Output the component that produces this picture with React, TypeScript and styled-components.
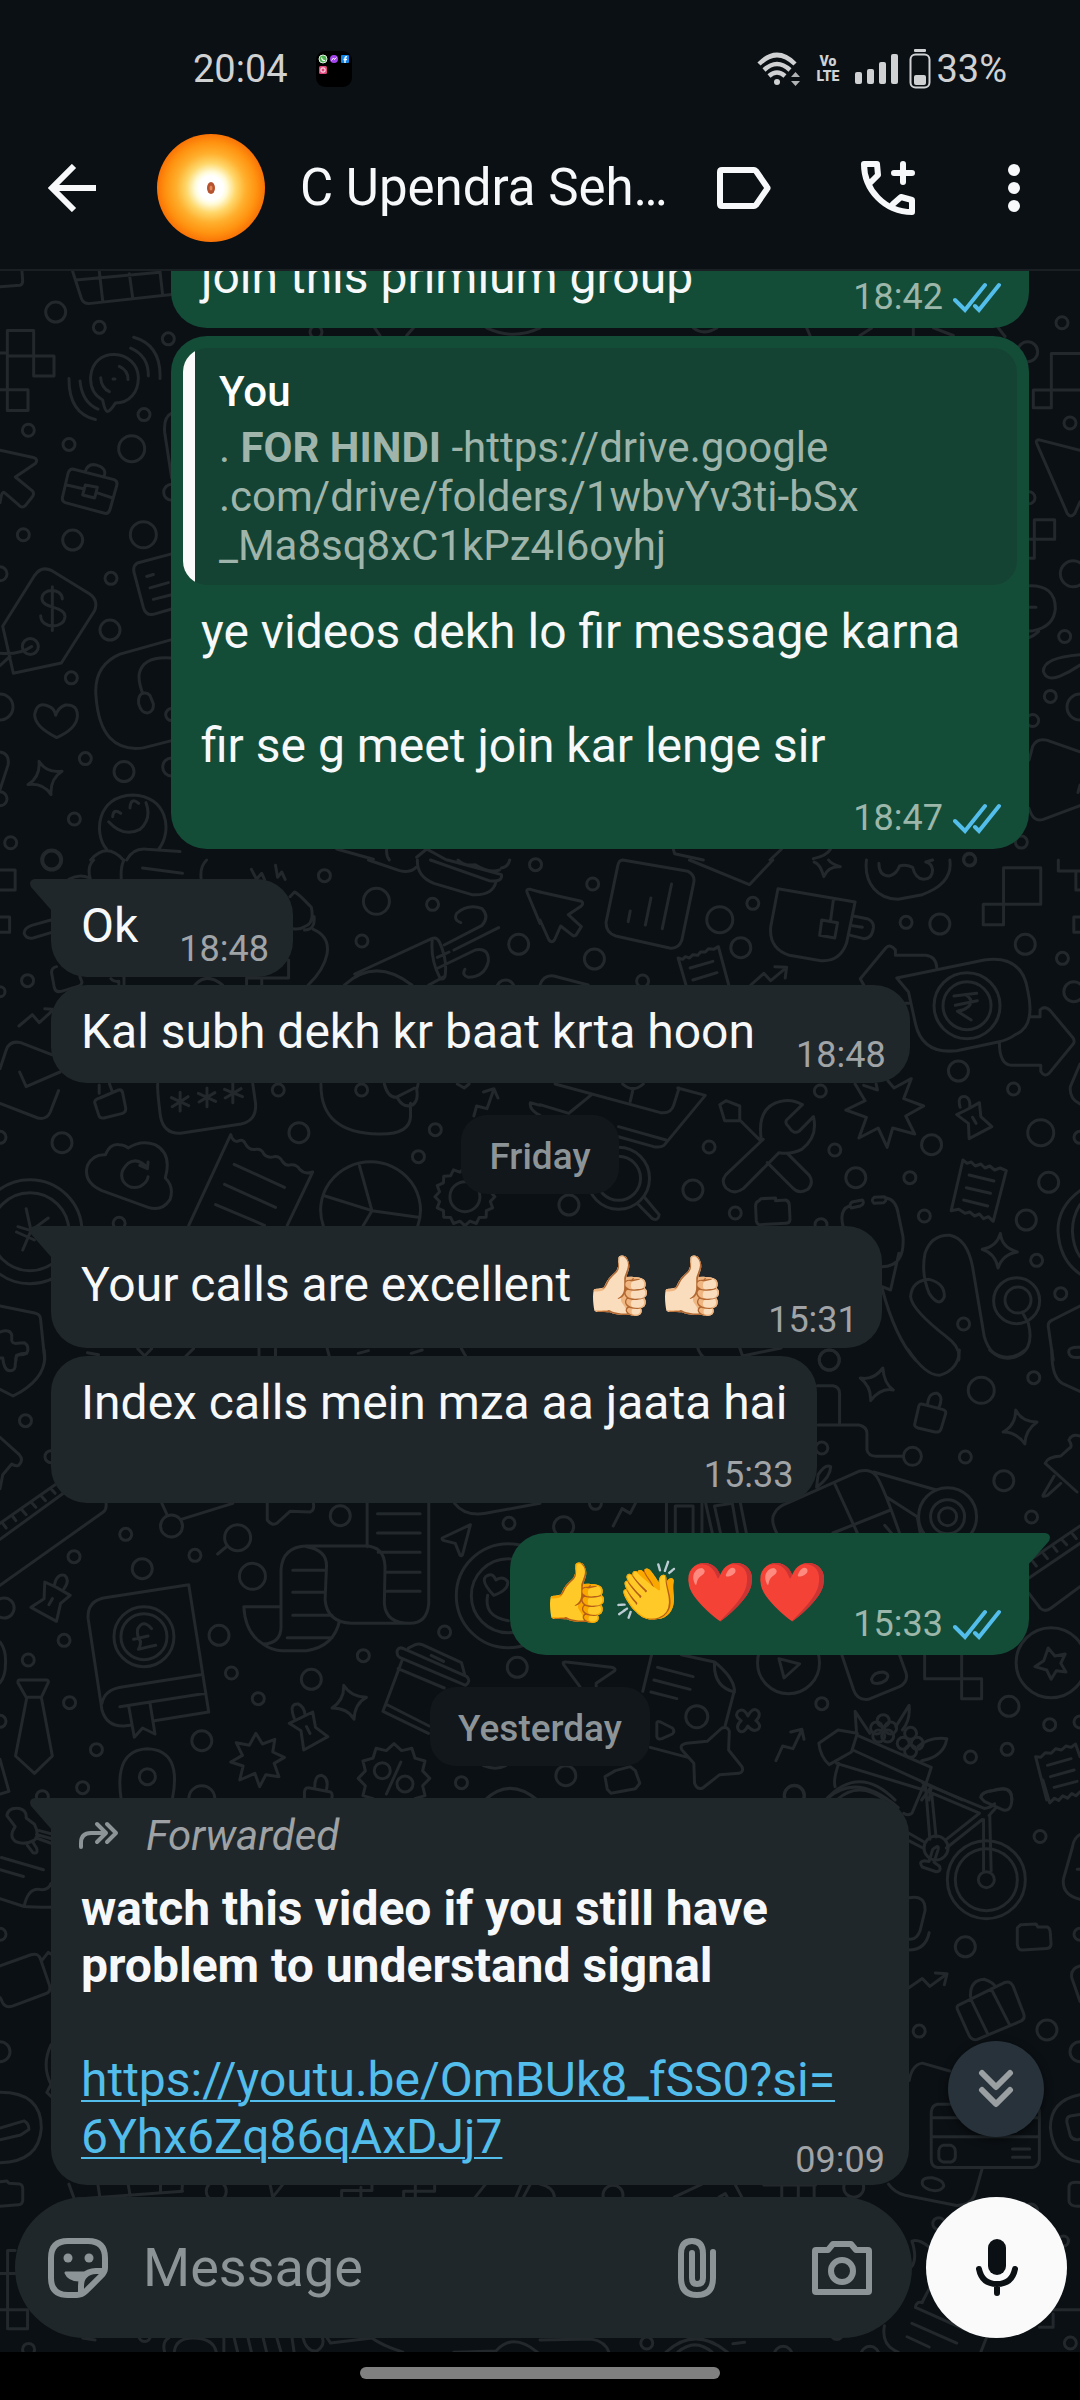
import React from 'react';
import styled, { createGlobalStyle, css } from 'styled-components';

const color = {
  ink: '#0b1014',
  doodle: '#22282c',
  incoming: '#20272b',
  outgoing: '#144d37',
  quote: '#144333',
  text: '#f7f8fa',
  muted: '#8d9498',
  link: '#53bdeb',
};

const GlobalStyle = createGlobalStyle`
  html, body { margin: 0; padding: 0; background: #000; }
  * { box-sizing: border-box; }
  button { border: 0; padding: 0; background: none; color: inherit; font: inherit; display: flex; align-items: center; justify-content: center; flex: none; }
  svg { display: block; flex: none; }
`;

/* ---------- shell ---------- */

const Screen = styled.div`
  display: flex;
  flex-direction: column;
  height: 100vh;
  overflow: hidden;
  background: ${color.ink};
  color: ${color.text};
  font-family: Roboto, 'Noto Sans', sans-serif;
`;

const StatusBar = styled.div`
  display: flex;
  align-items: center;
  flex: none;
  height: 106px;
  padding: 32px 73px 0 193px;
  color: #d0d1d2;
  font-size: 38px;
  line-height: 44px;
`;

const AppFolder = styled.div`
  margin-left: 28px;
  width: 36px;
  height: 36px;
  border-radius: 9px;
  background: #000;
`;

const StatusIcons = styled.div`
  display: flex;
  align-items: center;
  margin-left: auto;
`;

const Volte = styled.div`
  display: flex;
  flex-direction: column;
  align-items: center;
  margin: 0 16px;
  font-size: 14px;
  font-weight: 900;
  line-height: 15px;
`;

const Battery = styled.div`
  display: flex;
  align-items: center;
  gap: 5px;
  margin-left: 11px;
`;

const AppBar = styled.header`
  display: flex;
  align-items: center;
  flex: none;
  height: 165px;
  padding: 0 57px 0 48px;
  border-bottom: 2px solid #191f23;
`;

const Avatar = styled.div`
  display: flex;
  align-items: center;
  justify-content: center;
  flex: none;
  width: 108px;
  height: 108px;
  margin: 0 35px 0 61px;
  border-radius: 50%;
  background: radial-gradient(circle closest-side, #fff 0 22%, #fffbd8 30%, #ffd76a 46%, #ffb02e 64%, #ff9310 84%, #f97306 100%);
`;

const ContactName = styled.h1`
  flex: 1;
  min-width: 0;
  margin: 0;
  font-size: 51px;
  font-weight: 400;
  line-height: 60px;
  white-space: nowrap;
  overflow: hidden;
`;

const BarActions = styled.div`
  display: flex;
  align-items: center;
  gap: 90px;
`;

const Conversation = styled.main`
  position: relative;
  display: flex;
  flex-direction: column;
  flex: 1;
  min-height: 0;
  overflow: hidden;
`;

const WallpaperSvg = styled.svg`
  position: absolute;
  inset: 0;
  width: 100%;
  height: 100%;
`;

const Messages = styled.div`
  position: relative;
  display: flex;
  flex-direction: column;
  justify-content: flex-end;
  flex: 1;
  min-height: 0;
  padding: 0 51px 12px;
  overflow: hidden;
`;

/* ---------- bubbles ---------- */

const Bubble = styled.article<{ $out?: boolean; $tail?: boolean; $wide?: boolean; $gap?: number }>`
  position: relative;
  flex: none;
  max-width: 100%;
  width: ${p => (p.$wide ? '858px' : 'auto')};
  margin-top: ${p => p.$gap ?? 8}px;
  align-self: ${p => (p.$out ? 'flex-end' : 'flex-start')};
  background: ${p => (p.$out ? color.outgoing : color.incoming)};
  border-radius: 36px;
  ${p => p.$tail && (p.$out ? css`border-top-right-radius: 0;` : css`border-top-left-radius: 0;`)}
`;

const TailSvg = styled.svg<{ $out?: boolean }>`
  position: absolute;
  top: 0;
  ${p => (p.$out ? css`right: -21px; transform: scaleX(-1);` : css`left: -21px;`)}
`;

const InlineRow = styled.div<{ $out?: boolean }>`
  display: flex;
  align-items: flex-end;
  justify-content: space-between;
  gap: ${p => (p.$out ? 25 : 41)}px;
  padding: 0 ${p => (p.$out ? 28 : 24)}px 0 30px;
`;

const StackedRow = styled.div<{ $out?: boolean }>`
  display: flex;
  flex-direction: column;
  padding: 0 ${p => (p.$out ? 28 : 24)}px 0 30px;
`;

const OverlapRow = styled.div`
  display: grid;
  padding: 0 24px 0 30px;
  > * { grid-area: 1 / 1; }
  > p { margin-bottom: 20px; }
  > footer { align-self: end; justify-self: end; padding-bottom: 4px; }
`;

const Text = styled.p<{ $emoji?: boolean }>`
  margin: 18px 0 23px;
  font-size: 48px;
  line-height: ${p => (p.$emoji ? 81 : 57)}px;
  white-space: pre-line;
`;

const StackedText = styled(Text)`
  padding-right: 6px;
`;

const Link = styled.a`
  color: ${color.link};
  text-decoration: underline;
  text-decoration-thickness: 2px;
  text-underline-offset: 4px;
`;

const Emoji = styled.span`
  font-size: 58px;
  line-height: 58px;
  vertical-align: -4px;
`;

const MetaBox = styled.footer<{ $out?: boolean }>`
  display: flex;
  align-items: center;
  align-self: flex-end;
  gap: 10px;
  padding-bottom: ${p => (p.$out ? 10 : 7)}px;
  color: ${p => (p.$out ? '#9cb7aa' : '#a0a4a7')};
  font-size: 36px;
  line-height: 42px;
`;

const Quote = styled.blockquote`
  margin: 12px 12px 0;
  padding: 19px 24px 15px 36px;
  border-radius: 24px;
  background: linear-gradient(to right, #fafafa 12px, ${color.quote} 12px);
  color: #9fb5ab;
  font-size: 42px;
  line-height: 49px;
`;

const QuoteAuthor = styled.div`
  margin-bottom: 7px;
  color: #fff;
  font-weight: 500;
`;

const Forwarded = styled.div`
  display: flex;
  align-items: center;
  gap: 27px;
  padding: 13px 28px 2px;
  color: #9ea2a4;
  font-size: 42px;
  font-style: italic;
  line-height: 49px;
`;

const DayPill = styled.div`
  flex: none;
  align-self: center;
  margin-top: 32px;
  padding: 21px 28px 16px;
  border-radius: 26px;
  background: #12171b;
  color: ${color.muted};
  font-size: 37px;
  font-weight: 500;
  line-height: 42px;
`;

const ScrollButton = styled.button`
  position: absolute;
  right: 36px;
  bottom: 60px;
  width: 96px;
  height: 96px;
  border-radius: 50%;
  background: #27323a;
  box-shadow: 0 3px 8px rgba(0, 0, 0, 0.5);
`;

/* ---------- composer ---------- */

const Composer = styled.form`
  position: relative;
  display: flex;
  gap: 14px;
  flex: none;
  padding: 0 13px 14px 15px;
`;

const InputBar = styled.div`
  display: flex;
  align-items: center;
  flex: 1;
  min-width: 0;
  height: 141px;
  padding: 0 40px 0 33px;
  border-radius: 71px;
  background: ${color.incoming};
  color: ${color.muted};
`;

const MessageInput = styled.input`
  flex: 1;
  min-width: 0;
  margin: 0 35px;
  padding: 0;
  border: 0;
  outline: 0;
  background: none;
  color: ${color.text};
  font-family: inherit;
  font-size: 54px;
  line-height: 62px;
  &::placeholder { color: ${color.muted}; opacity: 1; }
`;

const InputActions = styled.div`
  display: flex;
  align-items: center;
  gap: 96px;
`;

const MicButton = styled.button`
  width: 141px;
  height: 141px;
  border-radius: 50%;
  background: #fafafa;
  color: ${color.ink};
`;

const NavBar = styled.div`
  display: flex;
  justify-content: center;
  flex: none;
  height: 48px;
  padding-top: 15px;
  background: #000;
`;

const NavHandle = styled.div`
  width: 360px;
  height: 12px;
  border-radius: 6px;
  background: #808080;
`;

/* ---------- wallpaper ---------- */

type Dot = [number, number, number];
interface Scene { at: [number, number]; scale: [number, number]; d: string; dots: Dot[]; rings?: Dot[] }

const zigzag = (cx: number, cy: number, outer: number, inner: number, n: number) => {
  let d = '';
  for (let i = 0; i < n * 2; i++) {
    const r = i % 2 ? inner : outer;
    const a = (i * Math.PI) / n;
    d += `${i ? 'L' : 'M'}${(cx + r * Math.cos(a)).toFixed(1)} ${(cy + r * Math.sin(a)).toFixed(1)}`;
  }
  return d + 'Z';
};

const X = 540 / 1568;
const scenes: Scene[] = [
  {
    at: [0, 260], scale: [1 / 3, 600 / 1568],
    d: 'M0 70L60 66Q68 64 68 54L66 30M218 30L244 100Q250 114 266 114L515 90M228 52L480 32M298 30L308 106M388 36L398 98M480 30L488 92' +
      'M22 184H101V251H22ZM22 251V393H84V339H22M101 251H162V303H101ZM0 243H22M0 339H22' +
      'M322 396Q314 394 308 366C280 352 270 330 272 304C276 266 306 246 344 247C384 248 414 274 415 306C416 346 388 374 346 374Q330 396 322 396ZM302 308Q304 334 328 344M358 278Q384 288 384 312M339 311H345' +
      'M207 310Q206 400 286 417M240 316Q246 372 294 390M401 202Q484 222 480 310M392 230Q446 250 445 303' +
      'M218 546L342 574Q354 578 350 590L330 652Q326 664 314 662L196 634Q184 630 188 618L204 558Q208 546 218 546ZM200 588L250 598M290 608L338 622M256 588L292 594L284 622L248 614ZM256 552Q264 530 290 536Q322 544 312 566' +
      'M0 497L100 516Q116 520 106 532L46 567L98 604Q104 612 96 620L76 642Q66 650 56 640L16 610Q8 602 4 616L0 634' +
      'M40 1080L8 957L104 824Q124 798 156 812L268 872Q296 888 284 916L184 1053ZM157 854V968M187 886C186 856 124 856 126 886C128 912 196 904 195 932C192 966 122 964 122 930M0 1028Q60 1032 95 1010M0 1060L30 1036' +
      'M515 768L412 792Q398 800 402 816L430 908Q438 930 460 926L515 912M440 827L460 822M450 857L505 843M460 887L515 875' +
      'M515 992L360 1030Q280 1060 288 1140Q300 1290 430 1275L515 1256M515 1040Q430 1034 418 1080Q414 1100 428 1132M424 1134Q440 1128 450 1138L460 1160Q462 1180 442 1184Q424 1184 416 1160Q414 1140 424 1134Z' +
      'M170 1248Q104 1220 104 1188Q112 1150 150 1168Q164 1174 167 1190Q174 1170 196 1163Q234 1160 232 1194Q228 1226 170 1248Z' +
      'M117 1310Q140 1342 186 1336Q150 1356 153 1397Q130 1366 84 1371Q122 1350 117 1310Z' +
      'M320 1540C280 1500 290 1400 398 1398C500 1400 520 1490 476 1540M326 1468Q370 1510 420 1488Q456 1460 438 1418M338 1455Q340 1432 362 1446M390 1432Q392 1402 416 1420M272 1568Q320 1520 370 1568M380 1568Q400 1536 440 1540L540 1546' +
      'M0 1286Q30 1290 24 1320L0 1384M515 400Q490 410 494 450L515 570',
    dots: [[167, 136, 10], [298, 176, 6], [505, 206, 6], [432, 404, 6], [395, 493, 13], [207, 482, 6], [85, 445, 6], [70, 718, 6], [218, 732, 10], [430, 718, 13], [333, 832, 6], [330, 967, 10], [0, 820, 7], [91, 1010, 8], [214, 1092, 6], [0, 1168, 13], [256, 1303, 6], [372, 1337, 10], [223, 1461, 6], [32, 1523, 6], [155, 1568, 10], [515, 607, 8], [515, 1188, 6], [515, 1325, 9], [0, 1408, 7]],
  },
  {
    at: [600, 320], scale: [1 / 3, 540 / 1568],
    d: 'M1354 97H1440M1354 97V255H1300V203H1440M1440 378L1318 348Q1306 348 1310 358L1402 562Q1412 576 1424 562L1440 528M1287 637H1364V580H1303V692H1287' +
      'M1287 772Q1366 770 1366 838Q1362 890 1300 902L1287 903M1287 834H1308M1287 922Q1300 918 1316 904M1440 972Q1330 980 1330 1020Q1340 1050 1380 1034Q1410 1022 1440 1002' +
      'M1440 1254L1340 1220Q1310 1214 1298 1238L1287 1278M1287 1418Q1300 1460 1330 1450L1440 1410M1434 1372L1440 1350' +
      'M-790 1536L-680 1566M-640 1536Q-642 1556 -632 1568M-550 1560L-520 1536L-460 1568M220 1537L224 1550L310 1568M545 1536L510 1568M692 1536Q680 1556 640 1564' +
      'M1195 23L1215 48M940 23V45M1000 23L1060 45M620 23L630 45M780 45L815 23M-340 23Q-260 60 -180 23M-676 23L-660 45M-580 45L-560 23M280 23Q310 46 350 23',
    dots: [[1386, 8, 6], [1283, 92, 10], [1410, 299, 6], [1420, 737, 13], [1394, 919, 6], [1351, 1093, 6], [1440, 1124, 13], [1298, 1163, 6], [1264, 1516, 6], [1287, 516, 6], [1108, 1566, 6], [-852, 35, 6]],
  },
  {
    at: [0, 860], scale: [X, 1 / 3],
    d: 'M0 30H44V90H0M0 171H28V217H0M148 180L92 196Q70 204 70 220Q76 238 96 234L148 218M200 58Q230 40 260 54M262 56Q252 20 272 0M352 56Q350 20 360 0M414 24L530 40M584 56Q580 20 600 0M730 28L745 58L760 40L768 58M800 16L806 52L818 36L828 58' +
      'M842 110L855 96Q866 100 904 142Q914 190 884 200Q870 210 850 206M884 210Q916 210 912 170M910 208C980 240 950 320 895 375M838 300V354H716V375M760 354V375M566 375Q600 335 646 375' +
      'M164 320Q148 324 150 340L158 384Q162 398 178 394L224 380Q238 376 238 366L232 350M322 356Q330 366 345 364V375M360 352V375M55 498L94 464L114 488L152 452M130 446L152 448' +
      'M150 584L60 548Q28 540 18 570L0 626M0 730L110 774Q136 780 146 756L170 692M57 636L76 680L174 636' +
      'M290 714L344 690Q354 688 356 698L365 744Q366 756 356 760L302 774Q290 776 287 766L275 728Q274 718 290 714ZM288 700V675M325 692L318 672' +
      'M458 672Q456 690 466 770Q476 822 524 820L700 792Q746 782 742 730L734 672M523 697V753M498 713L548 737M500 740L546 710M601 684V740M576 700L626 724M578 726L624 698M676 670V728M652 688L704 710M654 714L700 686' +
      'M932 672Q930 820 1100 822Q1190 824 1192 770V730M1116 672Q1126 712 1150 712L1204 684M1154 714Q1170 744 1196 736Q1216 724 1210 690L1214 672' +
      'M1070 0L1160 32Q1190 40 1208 22M1212 0Q1210 50 1260 70L1370 104Q1430 108 1440 66M1250 0L1420 62Q1460 68 1456 44L1300 0M1330 0Q1350 20 1380 14Q1420 40 1450 30M1480 0Q1476 20 1456 24' +
      'M1245 375L1290 350M1030 342L1255 235Q1268 230 1276 246Q1300 300 1292 350Q1284 364 1276 350Q1250 300 1255 240M1000 375Q1090 290 1196 375' +
      'M1290 255L1400 196Q1422 170 1400 146Q1360 130 1326 160Q1316 180 1338 188M1318 270L1448 203M1270 292L1304 276M1272 324L1380 270Q1420 262 1418 304Q1408 350 1360 352Q1340 346 1350 328M1568 190L1530 96Q1528 86 1540 88L1568 96' +
      'M1328 672L1348 684L1362 672M1376 768L1384 738L1414 746L1434 688M1404 696L1434 686L1446 714M1568 736L1540 728Q1536 750 1568 766' +
      'M306 884Q320 850 346 854Q362 854 372 864Q410 838 450 854Q500 880 480 954Q506 980 494 1018Q470 1056 430 1042L296 992Q240 966 254 916Q270 882 306 884ZM428 924Q400 890 372 910Q344 936 358 964Q376 990 406 980Q428 968 430 950M406 916L428 926L430 906' +
      'M548 1096L670 824Q676 846 690 844Q706 836 712 850Q722 872 744 868Q760 866 766 882Q778 896 796 890Q812 888 820 904Q830 920 846 914Q864 914 870 928Q884 944 908 936L834 1096M680 913L826 982M652 973L800 1042M626 1034L768 1096' +
      'M939 1098A145 145 0 1 1 1213 1098M1044 918L1080 1052L1215 1072M1080 1052L944 1008M1080 1052L1054 1098' +
      zigzag(1350, 1010, 87, 75, 16) +
      'M52 1100L90 1112L140 1074M76 1046L90 1112L66 1170M48 1116L100 1140' +
      'M0 1338L104 1360Q118 1364 118 1380L130 1500M0 1416Q28 1406 34 1424V1440Q34 1452 50 1450L70 1448Q84 1456 80 1474Q76 1484 60 1484Q44 1484 46 1500' +
      'M254 1478L286 1484M400 1466L420 1488L440 1466M540 1488L562 1466M752 1466V1488M800 1466V1488M950 1466L956 1488M1040 1480L1070 1472M1194 1480L1226 1470M1340 1466L1352 1488',
    dots: [[80, 362, 6], [0, 395, 5], [942, 47, 6], [1093, 124, 13], [1256, 133, 6], [1051, 243, 6], [1506, 253, 10], [1555, 14, 6], [808, 690, 6], [1050, 690, 6], [868, 818, 10], [1264, 809, 6], [1215, 890, 6], [180, 848, 10], [0, 832, 6], [346, 1090, 6], [150, 0, 9], [1468, 387, 9]],
    rings: [[87, 1115, 52], [87, 1115, 39], [1350, 1010, 15]],
  },
  {
    at: [540, 860], scale: [X, 1 / 3],
    d: 'M0 96L120 124Q128 130 120 138L82 164L120 200L104 226Q98 230 92 224L60 198L42 240Q34 250 26 240L0 180' +
      'M240 0L430 34Q452 46 446 70L412 240Q402 268 376 264L220 228Q190 218 192 186L226 16Q230 0 240 0M262 153L256 185M322 114L306 195M382 72L355 206M434 0L608 74L676 0M796 6Q814 12 824 50Q836 18 872 20Q846 12 838 0' +
      'M948 0C940 70 980 116 1040 118L1110 104Q1200 70 1190 0M984 10Q984 48 1014 48Q1036 42 1044 18Q1062 12 1082 22Q1090 56 1114 58Q1140 56 1140 30Q1138 10 1120 6L1140 0' +
      'M1346 23H1454V133H1346ZM1287 133H1346V194H1287ZM1505 0V33H1568M1556 33V90H1568M1568 171H1550V217H1568' +
      'M691 86L915 126L890 250Q870 306 816 302L724 286Q664 266 670 200ZM852 118L844 180M818 180L864 188L856 234L812 226ZM910 168L950 176Q970 184 968 204Q964 236 940 236L902 226M908 197L936 202' +
      'M424 375L401 294L414 298L422 290L434 294L444 284L458 286L466 276L480 276L490 266L504 268L518 260L548 375M436 324L502 304M444 360L514 338M612 375L650 340L670 362L716 322M682 320L716 322L712 354M0 375Q10 344 40 348L140 375' +
      'M940 375L930 356L1004 264Q1018 250 1032 270V286H1120Q1150 290 1152 322M1036 354L1290 300Q1400 284 1416 390Q1440 500 1380 524Q1360 540 1330 546L1210 572Q1110 584 1090 490L1070 396ZM1060 430H1070M1424 470H1452V450Q1464 436 1480 450L1548 534Q1554 544 1548 552L1478 640Q1464 652 1454 634V616H1370Q1334 614 1334 548M1202 408L1268 400M1206 436L1270 422M1236 404Q1262 420 1244 440Q1230 452 1212 454L1252 480' +
      'M44 672L350 758Q380 762 388 736L404 684M400 684L480 706L360 856Q350 864 330 860L220 828M228 800L366 840M88 756L150 704M262 724L270 688M0 734L84 760M240 672Q270 700 300 672' +
      'M642 834Q630 740 700 724Q730 716 762 734L716 780Q710 790 722 800Q736 824 752 814L794 770Q808 830 760 868Q730 884 694 878L590 986Q564 1006 540 984Q524 964 540 944L648 838M580 780L640 842M580 782H536L522 734L540 722L580 738ZM660 908L734 984Q752 1004 778 988Q796 968 782 946L718 880' +
      'M915 672L944 722L888 750L948 772L926 834L982 804L1008 862L1024 804L1088 822L1062 768L1114 738L1056 716L1078 656L1028 684L1010 662M940 676L980 690L976 672' +
      'M1238 750L1210 764L1244 790L1246 836L1312 800L1280 770L1276 728L1238 750M1220 742Q1210 706 1236 710Q1250 716 1248 742M1256 772L1266 790M284 1032L326 1076Q344 1084 346 1064L302 1010' +
      'M1228 900L1240 910L1252 906L1264 918L1280 912L1292 924L1306 918L1320 930L1336 924L1354 932L1316 1084L1302 1070L1288 1076L1276 1062L1262 1068L1248 1056L1234 1060L1216 1048L1194 1052ZM1246 945L1318 963M1238 983L1308 1000M1230 1020L1300 1038' +
      'M636 1022L642 1016L684 1014V1022L714 1020Q724 1024 724 1036L726 1080Q724 1090 714 1090L640 1094Q630 1094 628 1082L626 1038Q626 1026 636 1022Z' +
      'M880 1098Q868 1050 898 1038M906 1026L936 1020Q944 1030 930 1038L904 1044Q896 1034 906 1026ZM970 1012L1000 1010Q1010 1020 998 1028L970 1030Q960 1020 970 1012ZM1006 1014Q1034 1020 1040 1060L1054 1130Q1060 1220 993 1220M1042 1180L1018 1290L993 1280M993 1284Q1030 1430 1090 1500' +
      'M1216 1500Q1222 1460 1180 1430Q1080 1350 1076 1310Q1080 1262 1130 1258Q1176 1270 1174 1310Q1160 1346 1130 1300Q1106 1240 1118 1180Q1136 1124 1190 1126Q1240 1136 1256 1220L1290 1430Q1310 1500 1366 1494Q1440 1480 1418 1390L1400 1356' +
      'M1337 1120Q1340 1162 1386 1176Q1344 1182 1330 1224Q1322 1180 1284 1168Q1326 1160 1337 1120Z' +
      'M1568 992Q1504 1040 1504 1112Q1508 1200 1568 1242M1568 1034Q1546 1070 1546 1114Q1548 1160 1568 1190M1490 1500L1476 1400Q1474 1386 1488 1380L1568 1338M1568 1462Q1530 1460 1536 1480Q1540 1496 1568 1492M1568 612L1540 680Q1536 716 1568 732' +
      'M458 1464Q466 1488 480 1494M580 1464L588 1488L700 1464',
    dots: [[153, 72, 6], [618, 130, 6], [522, 179, 13], [583, 263, 10], [158, 297, 10], [298, 363, 6], [1063, 187, 6], [1161, 192, 10], [1409, 253, 10], [1517, 295, 6], [1550, 395, 10], [1215, 633, 10], [1375, 687, 6], [814, 693, 6], [491, 861, 6], [856, 870, 6], [1137, 854, 10], [1454, 818, 13], [1568, 832, 6], [917, 953, 10], [1074, 953, 6], [444, 990, 10], [84, 1035, 10], [1477, 967, 10], [567, 1059, 6], [816, 1094, 6], [1116, 1068, 6], [1412, 1080, 10], [1442, 1201, 6], [1512, 1301, 6], [1230, 1392, 6], [840, 1500, 10], [1248, 0, 6]],
    rings: [[1240, 437, 33], [1240, 437, 24], [228, 955, 31], [228, 955, 22], [1384, 1322, 23], [1388, 1320, 13]],
  },
  {
    at: [0, 1350], scale: [X, 1 / 3],
    d: 'M0 118L38 138Q130 90 130 20L128 0M0 24H8Q12 62 28 62Q46 62 44 44L48 16Q60 10 78 10M0 262L56 314Q70 330 54 346Q44 350 34 342L8 374L0 416' +
      'M0 520L160 404M0 568L184 430M8 520L18 534M36 498L46 512M64 480L76 494M92 458L104 472M120 438L132 452M148 416L160 430M0 706L300 486Q310 478 308 460' +
      'M470 460L486 496M526 508L676 460M632 612L660 588M776 460V510Q790 530 806 518L842 484L900 486Q914 480 910 460' +
      'M1066 460V590M1245 460V760Q1240 820 1190 820Q1120 820 1116 760L1118 650Q1116 588 1060 588H890Q820 590 816 660V830Q816 880 764 882Q712 850 708 770H814M890 590Q950 600 948 650L944 750Q950 816 1020 820H1190M764 882Q790 902 820 902H890Q970 890 986 812M1096 491H1220M1096 549H1220M1098 607H1220M1124 667H1220M1124 724H1220M850 661H944M850 727H944M850 796H964M834 863H964' +
      'M548 704L300 744Q252 756 256 806L296 1080Q310 1130 360 1128L378 1126M448 1112L606 1086L548 704M296 1060Q304 1020 350 1012L582 974M348 1070L598 1030M374 1070L390 1162L414 1134L450 1152L436 1062M440 836Q416 806 400 836Q396 860 408 874Q408 890 402 898Q430 890 452 886M388 868L430 858' +
      'M130 696L164 712L204 736L176 760L164 814L90 772L128 746ZM158 706Q164 670 188 676Q204 690 186 716M152 746L142 764' +
      'M1366 524L1284 564Q1282 570 1290 572L1322 580L1336 616Q1342 620 1344 610Z' +
      'M1434 736Q1396 696 1410 680Q1430 664 1440 690Q1460 676 1474 694Q1478 720 1434 736ZM1416 736Q1404 800 1476 812' +
      'M56 990H136Q142 992 140 998L120 1042H76L52 998Q52 990 56 990ZM78 1042L45 1218L100 1270L152 1218L120 1042M0 876Q18 900 16 940Q16 980 0 998M0 1228L26 1324L0 1332' +
      'M352 1350Q330 1200 428 1196Q530 1200 500 1350' +
      'M743 1150L762 1182L798 1168L792 1206L826 1222L796 1240L810 1280L772 1274L754 1310L740 1270L696 1290L706 1248L670 1236L704 1216L686 1178L724 1186Z' +
      'M908 1086L840 1120L874 1142L882 1200L952 1160L916 1132ZM854 1104Q838 1060 866 1062Q884 1070 886 1096M890 1130L900 1150' +
      'M998 1006Q1018 1040 1064 1042Q1030 1060 1028 1108Q1010 1074 964 1074Q1000 1050 998 1006Z' +
      'M1154 900Q1160 890 1172 896L1356 980Q1368 994 1352 1006L1160 922Q1150 914 1154 900ZM1186 894L1206 884Q1216 880 1226 884L1340 938L1350 976M1252 916L1288 934M1168 930L1112 1084L1244 1150M1156 956L1290 1014M1120 1062L1246 1128' +
      zigzag(1144, 1285, 104, 86, 12) + 'M1164 1236L1122 1332' +
      'M884 1350V1326Q886 1310 900 1314L960 1326Q968 1332 962 1350M914 1310Q914 1276 934 1276Q956 1284 948 1318M1320 460Q1350 500 1410 490L1568 460M1408 1350Q1480 1280 1560 1350M1404 1247Q1440 1262 1468 1247',
    dots: [[74, 212, 6], [148, 320, 6], [215, 620, 6], [365, 553, 6], [413, 656, 10], [566, 616, 6], [733, 679, 13], [988, 497, 10], [1478, 520, 6], [186, 871, 6], [12, 774, 10], [82, 930, 6], [0, 1114, 6], [202, 1058, 6], [636, 856, 10], [672, 969, 6], [750, 1046, 6], [904, 988, 10], [1055, 917, 6], [1291, 846, 6], [1502, 952, 10], [586, 1172, 10], [280, 1199, 6], [240, 1313, 6], [123, 1340, 6], [586, 1346, 13], [1340, 1298, 6]],
    rings: [[498, 528, 11], [690, 563, 13], [418, 860, 30], [418, 860, 23], [1476, 737, 52], [1476, 737, 37], [428, 1280, 8], [1110, 1262, 8], [1176, 1302, 8]],
  },
  {
    at: [500, 1350], scale: [580 / 1568, 1 / 3],
    d: 'M858 107H900Q918 110 918 130V220M860 225H970Q992 230 992 250V300Q996 318 1016 319H1090M856 410L860 374Q880 340 894 350Q894 380 856 412' +
      'M1035 54Q1038 100 1063 120Q1030 112 1002 152Q1004 110 974 84Q1010 92 1035 54ZM1394 180Q1410 216 1452 216Q1420 240 1419 282Q1396 246 1360 246Q1394 226 1394 180Z' +
      'M1140 162L1196 178Q1208 182 1204 194L1192 238Q1188 248 1176 246L1130 234Q1118 230 1122 218L1132 170Q1134 160 1140 162ZM1156 162Q1160 126 1182 130Q1200 140 1186 174' +
      'M1104 0Q1150 76 1188 76Q1240 60 1242 0M1324 0Q1370 44 1420 0M1492 0Q1490 80 1520 100L1568 124M1568 258Q1546 250 1538 270Q1550 290 1538 296L1516 318Q1480 320 1474 340L1560 426M1498 378L1468 436Q1466 442 1480 436L1516 400' +
      'M748 549Q730 510 742 490Q750 470 780 458L970 364Q1000 356 1014 374Q1030 390 1080 549M906 404L966 549M1056 480L900 549M1010 366L1180 420M1044 440L1128 500L1136 549M1040 526L1058 549' +
      'M450 460V549M474 549V468H522V549M546 460V549M556 460L574 549M596 549L580 468L628 460L642 549M650 460L666 549M306 528L330 476L352 490L366 460' +
      'M1568 528L1430 632M1430 684L1568 580M1440 634L1450 648M1470 612L1480 626M1496 590L1506 604M1520 570L1532 584M1548 552L1558 566M1430 730L1460 774Q1474 788 1490 774L1568 710' +
      'M1482 894L1500 918L1528 912L1516 940L1530 966L1504 962L1490 988L1478 960L1446 950L1470 932ZM754 926L810 942L768 984Z' +
      'M924 914L956 1020Q966 1052 996 1048L1080 1010Q1104 996 1098 970L1080 914M1004 988Q1010 966 1036 966Q1056 972 1044 990Q1024 1006 1008 998ZM1148 914V986H1302V1046H1248V914' +
      'M410 914L386 1024M426 952L522 980M416 990L514 1018M408 1026L478 1046M490 914L580 936Q630 980 634 1020L608 1130M580 936Q576 1010 634 1026M172 942Q168 934 180 936L300 952Q314 954 310 962L260 1000V1010M172 944L216 1010' +
      'M424 1120Q424 1112 434 1116L466 1134Q474 1144 466 1152L438 1166Q426 1170 424 1160ZM600 1134Q616 1128 620 1144L618 1200L654 1250Q660 1266 646 1270L594 1274L548 1314Q532 1320 526 1300L524 1240L492 1200Q484 1184 504 1180L560 1174ZM406 1192L508 1222' +
      'M670 1098Q684 1068 698 1084Q706 1098 692 1112Q708 1126 698 1138Q684 1148 670 1128Q660 1152 646 1142Q636 1128 652 1112Q632 1098 644 1084Q660 1072 670 1098ZM746 1232L764 1188L792 1196L816 1140M786 1146L816 1138L822 1168' +
      'M966 1150L914 1140L862 1180Q866 1220 890 1244L950 1206ZM964 1150L960 1084L1000 1150M1070 1130L1106 1066Q1110 1110 1088 1140M1130 1190Q1160 1160 1208 1166Q1200 1220 1140 1232M966 1156L1166 1252L1146 1320L910 1240M916 1240Q900 1290 906 1310M954 1200L1250 1350M1140 1350L1166 1310L1160 1350' +
      'M880 1350Q970 1240 1068 1350M910 1350Q970 1290 1040 1350' +
      'M1478 1350L1448 1220L1462 1222L1474 1208L1490 1210L1502 1196L1518 1200L1530 1188L1544 1192L1556 1182L1568 1220M1480 1246L1544 1226M1488 1280L1552 1260M1498 1312L1560 1294' +
      'M284 1280L312 1262L352 1250L366 1262L378 1300L366 1316L300 1330L290 1318ZM1300 1340Q1300 1330 1320 1324L1362 1316Q1384 1320 1384 1350',
    dots: [[890, 30, 10], [1301, 121, 13], [1443, 83, 6], [870, 294, 6], [1258, 321, 6], [1362, 392, 10], [1437, 501, 6], [172, 530, 10], [532, 1100, 11], [870, 1061, 6], [1376, 1069, 10], [1486, 1124, 6], [1371, 1198, 6], [1272, 1221, 6], [1568, 1116, 6], [178, 1277, 10], [796, 1336, 10], [258, 460, 6], [1036, 1112, 6], [1018, 1134, 6], [1056, 1134, 6], [1024, 1158, 6], [1048, 1158, 6], [1110, 1150, 6], [1090, 1180, 6], [1128, 1180, 6], [1110, 1204, 6]],
    rings: [[1115, 319, 9], [1210, 500, 29], [1210, 500, 17], [1210, 500, 9], [1490, 938, 35], [780, 938, 31]],
  },
  {
    at: [0, 1780], scale: [X, 620 / 1568],
    d: 'M20 90Q24 68 56 72Q78 76 76 96L100 112Q116 140 100 152Q70 166 46 156Q24 144 44 118ZM80 166L96 184Q112 188 106 172L96 158M104 146L148 160M106 138L148 148M114 128L148 136' +
      'M4 196L126 227M0 227L68 244M0 300L70 320Q90 322 148 322M70 320Q80 276 110 276Q140 282 148 262M0 470L90 442Q112 436 118 454L144 520Q148 536 134 540L36 572Q12 578 4 556L0 550M120 458L140 436L148 440M148 670Q120 720 148 770L136 790L148 800' +
      'M0 790Q120 790 120 880Q114 966 0 968M0 880L70 862Q84 868 84 884L60 898L0 910M0 1016L20 1014L26 1020L58 1022Q66 1024 66 1034V1064Q64 1074 54 1074L0 1078' +
      'M200 1022L214 1055M284 1022L290 1055M372 1022L378 1052M466 1022V1044M530 1022L528 1040M216 1060L530 1040M784 1022L792 1055L822 1022M992 1055V1038H1080V1022M1048 1055V1030M1172 1055V1040H1262V1022M1206 1022V1055M1380 1055L1410 1022M1498 1055L1514 1022M1520 1055L1540 1022' +
      'M44 1190H22V1388H80V1340H0M0 1248H44M240 1411L276 1416M478 1447Q470 1420 490 1411M506 1447Q510 1411 560 1411Q620 1411 628 1447M650 1411V1447M680 1411L690 1447M720 1411L730 1447M764 1411L774 1447M804 1411L816 1447M848 1411L854 1447M880 1411Q890 1447 920 1444Q944 1430 936 1411M950 1411L960 1424L1080 1411Q1110 1430 1170 1447M1318 1447L1440 1444Q1490 1396 1560 1447',
    dots: [[0, 390, 6], [0, 687, 10], [628, 1040, 10], [83, 1440, 6], [420, 1405, 6]],
  },
  {
    at: [540, 1780], scale: [X, 620 / 1568],
    d: 'M1120 20L1132 150M1138 40L1150 144M1112 8L1290 72Q1310 70 1320 60M1140 34L1276 84L1180 150M1284 100L1180 172M1288 100V230M1306 90L1310 230M1304 90L1324 70M1280 44Q1284 30 1310 28Q1370 10 1370 46Q1370 80 1346 76L1290 54ZM1116 10L1080 84Q1070 92 1056 84M1070 134L1118 158M1072 154L1112 172' +
      'M1140 176Q1160 160 1156 176L1144 208L1160 218Q1166 232 1150 232L1110 220Q1098 206 1116 204L1130 206ZM836 46Q920 -20 1040 70' +
      'M1460 0L1480 58L1494 46L1506 52L1518 40L1532 46L1544 34L1556 40L1568 30M1386 374L1396 366L1440 364L1446 372H1474Q1482 376 1482 390L1484 416Q1482 426 1472 426L1400 430Q1388 430 1386 416Z' +
      'M1214 570L1350 512Q1366 508 1374 522L1404 590Q1410 604 1396 610L1270 656Q1254 660 1246 646L1214 584Q1208 574 1214 570ZM1252 556L1300 642M1310 528L1364 620M1250 548Q1248 506 1290 504Q1316 512 1322 522' +
      'M1070 526L1110 502L1132 522L1182 490M1148 488L1182 490L1174 518M1072 298Q1120 290 1118 330L1104 380Q1094 406 1070 402M1070 430Q1120 430 1130 386' +
      'M1568 138Q1550 146 1546 170L1520 250Q1514 290 1568 302M1560 226H1568M1568 470Q1540 476 1544 500L1568 560M1568 796Q1482 810 1482 880Q1490 960 1568 966M1568 846L1540 850Q1528 852 1530 866L1540 900Q1550 914 1568 908M1568 1018Q1536 1014 1536 1030V1066Q1540 1080 1568 1078' +
      'M1154 820H1430Q1450 824 1450 840V960Q1448 978 1430 980H1154Q1136 978 1136 960V840Q1138 822 1154 820ZM1136 854H1450M1136 902H1450M1170 924H1194Q1206 928 1206 940V954Q1204 964 1194 966H1170Q1158 962 1158 952V938Q1160 926 1170 924ZM1372 933H1422M1372 954H1422' +
      'M1072 760Q1080 720 1110 716L1190 736M1012 1022Q1030 1044 1060 1050L1210 1076Q1250 1076 1262 1050L1284 982M1110 1018Q1110 1004 1140 1006Q1176 1014 1172 1028Q1160 1044 1130 1036Q1108 1028 1110 1018Z' +
      'M0 1022Q40 1030 42 1055M390 1055L470 1022M566 1022L586 1055M520 1055L538 1046L544 1055M650 1024H800M702 1022V1055M750 1022V1055M796 1022V1055' +
      'M1080 1230Q1096 1210 1080 1166Q1100 1160 1128 1180M1140 1270L1110 1320M1110 1322Q1094 1316 1090 1334L1230 1388Q1250 1390 1250 1380M1080 1374L1210 1424M1066 1408L1130 1434M1000 1380Q990 1430 1040 1447M1296 1411L1280 1447M1490 1350V1384H1450M1490 1340H1568' +
      'M0 1416L150 1414Q190 1420 200 1447M366 1447Q450 1380 544 1447M400 1447Q450 1410 500 1447M560 1426L594 1422',
    dots: [[738, 40, 10], [1452, 143, 6], [1235, 422, 10], [1568, 390, 6], [1101, 635, 6], [1472, 632, 10], [1568, 687, 10], [212, 1050, 10], [911, 1030, 10], [1425, 1090, 7], [1158, 1122, 6], [1520, 1166, 5], [1540, 1424, 6], [310, 1424, 6], [862, 1400, 6], [706, 1455, 9], [958, 1455, 9]],
    rings: [[1296, 252, 39], [1296, 252, 31], [1296, 252, 8], [1150, 172, 12]],
  },
];

const Wallpaper = () => (
  <WallpaperSvg viewBox="0 271 1080 2081" preserveAspectRatio="xMidYMin slice" fill="none" stroke={color.doodle} strokeWidth="3" strokeLinecap="round" strokeLinejoin="round" aria-hidden="true">
    {scenes.map((s, i) => (
      <g key={i}>
        <g transform={`translate(${s.at[0]} ${s.at[1]}) scale(${s.scale[0]} ${s.scale[1]})`}>
          <path d={s.d} vectorEffect="non-scaling-stroke" />
        </g>
        {[...s.dots, ...(s.rings ?? [])].map(([x, y, r], k) => (
          <circle key={k} cx={s.at[0] + x * s.scale[0]} cy={s.at[1] + y * s.scale[1]} r={r} />
        ))}
      </g>
    ))}
  </WallpaperSvg>
);

/* ---------- icons ---------- */

const Ticks = () => (
  <svg width="48" height="31" viewBox="0 0 48 31" fill="none" stroke={color.link} strokeWidth="4" strokeLinecap="round" aria-label="Read" role="img">
    <path d="M2 18L12 28L32 3M22 24L26 28L46 3" />
  </svg>
);

const Tail = ({ out }: { out?: boolean }) => (
  <TailSvg $out={out} width="22" height="32" viewBox="0 0 22 32" aria-hidden="true">
    <path d="M22 0H5Q-2 1 1 8L22 32Z" fill={out ? color.outgoing : color.incoming} />
  </TailSvg>
);

const Meta = ({ time, out }: { time: string; out?: boolean }) => (
  <MetaBox $out={out}>
    <time>{time}</time>
    {out && <Ticks />}
  </MetaBox>
);

const Note = ({ children, time, out, tail, gap, emoji }: { children: React.ReactNode; time: string; out?: boolean; tail?: boolean; gap?: number; emoji?: boolean }) => (
  <Bubble $out={out} $tail={tail} $gap={gap}>
    {tail && <Tail out={out} />}
    <InlineRow $out={out}>
      <Text $emoji={emoji}>{children}</Text>
      <Meta time={time} out={out} />
    </InlineRow>
  </Bubble>
);

export default function App() {
  return (
    <>
      <GlobalStyle />
      <Screen>
        <StatusBar>
          <span>20:04</span>
          <AppFolder>
            <svg width="36" height="36" viewBox="0 0 36 36" aria-hidden="true">
              <circle cx="7" cy="8" r="4" fill="#4caf50" stroke="#dfeee0" strokeWidth="1" />
              <path d="M5.500 6.500Q6 10 9 9.500" stroke="#fff" strokeWidth="1.200" fill="none" />
              <circle cx="18" cy="8" r="4" fill="#a545ee" />
              <path d="M15.500 9.500L17.500 7L18.500 8.500L20.500 6.500" stroke="#fff" strokeWidth="1" fill="none" />
              <rect x="25" y="4" width="8" height="8" rx="1" fill="#1384e8" />
              <path d="M31 6Q29 5 29 8V12M27.500 8.500H31" stroke="#fff" strokeWidth="1.400" fill="none" />
              <rect x="3" y="15" width="8" height="8" rx="1.500" fill="#e0457b" />
              <rect x="5" y="17" width="4" height="4" rx="1" fill="none" stroke="#fff" strokeWidth="1" />
            </svg>
          </AppFolder>
          <StatusIcons>
            <svg width="44" height="36" viewBox="0 0 44 36" fill="none" stroke="#d0d1d2" strokeWidth="4.500" aria-hidden="true">
              <path d="M2 13Q20 -5 38 13M7 19Q20 7 33 19M12 25Q20 18 28 25" />
              <circle cx="20" cy="31" r="3" fill="#d0d1d2" stroke="none" />
              <path d="M34 26L38.500 21L43 26ZM34 30H43L38.500 35Z" fill="#b0b2b3" stroke="none" />
            </svg>
            <Volte><span>Vo</span><span>LTE</span></Volte>
            <svg width="43" height="30" viewBox="0 0 43 30" fill="#d0d1d2" aria-hidden="true">
              <rect y="18" width="7" height="12" rx="2" />
              <rect x="12" y="15" width="7" height="15" rx="2" />
              <rect x="24" y="8" width="7" height="22" rx="2" />
              <rect x="36" y="0" width="7" height="30" rx="2" />
            </svg>
            <Battery>
              <svg width="22" height="40" viewBox="0 0 22 40" fill="#d0d1d2" aria-hidden="true">
                <rect x="5" y="0" width="12" height="3" rx="1" />
                <rect x="1.500" y="5.500" width="19" height="33" rx="5" fill="none" stroke="#d0d1d2" strokeWidth="2" />
                <rect x="5" y="26" width="12" height="10" rx="2" />
              </svg>
              <span>33%</span>
            </Battery>
          </StatusIcons>
        </StatusBar>

        <AppBar>
          <button aria-label="Back">
            <svg width="48" height="48" viewBox="0 0 48 48" fill="none" stroke="currentColor" strokeWidth="6">
              <path d="M48 24H5M26 2L4 24L26 46" />
            </svg>
          </button>
          <Avatar>
            <svg width="8" height="12" viewBox="0 0 8 12" aria-hidden="true">
              <ellipse cx="4" cy="6" rx="4" ry="6" fill="#b5522f" />
              <ellipse cx="4" cy="6" rx="1.500" ry="2.500" fill="#e58a5c" />
            </svg>
          </Avatar>
          <ContactName>C Upendra Seh…</ContactName>
          <BarActions>
            <button aria-label="Label chat">
              <svg width="54" height="42" viewBox="0 0 54 42" fill="none" stroke="currentColor" strokeWidth="6" strokeLinejoin="round">
                <path d="M5 3H37Q38 3 39 4L50 20Q51 21 50 22L39 38Q38 39 37 39H5Q3 39 3 37V5Q3 3 5 3Z" />
              </svg>
            </button>
            <button aria-label="New call">
              <svg width="54" height="54" viewBox="0 0 54 54" fill="none" stroke="currentColor" strokeWidth="6" strokeLinejoin="round" strokeLinecap="round">
                <path d="M9 22L17 14L16 3H3C3 29 24 51 51 51V39L40 36L32 43" />
                <path d="M42 3V21M33 12H51" />
              </svg>
            </button>
            <button aria-label="More options">
              <svg width="18" height="48" viewBox="0 0 18 48" fill="currentColor">
                <circle cx="9" cy="6" r="6" />
                <circle cx="9" cy="24" r="6" />
                <circle cx="9" cy="42" r="6" />
              </svg>
            </button>
          </BarActions>
        </AppBar>

        <Conversation>
          <Wallpaper />
          <Messages>
            <Bubble $out $wide>
              <InlineRow $out>
                <Text>join this primium group</Text>
                <Meta time="18:42" out />
              </InlineRow>
            </Bubble>

            <Bubble $out $wide>
              <Quote>
                <QuoteAuthor>You</QuoteAuthor>
                . <b>FOR HINDI</b> -https://drive.google<br />
                .com/drive/folders/1wbvYv3ti-bSx<br />
                _Ma8sq8xC1kPz4I6oyhj
              </Quote>
              <StackedRow $out>
                <StackedText>{'ye videos dekh lo fir message karna\n\nfir se g meet join kar lenge sir'}</StackedText>
                <Meta time="18:47" out />
              </StackedRow>
            </Bubble>

            <Note time="18:48" tail gap={30}>Ok</Note>
            <Note time="18:48">Kal subh dekh kr baat krta hoon</Note>

            <DayPill>Friday</DayPill>

            <Note time="15:31" tail gap={32} emoji>Your calls are excellent <Emoji>👍🏻👍🏻</Emoji></Note>
            <Bubble>
              <StackedRow>
                <StackedText>Index calls mein mza aa jaata hai</StackedText>
                <Meta time="15:33" />
              </StackedRow>
            </Bubble>

            <Note time="15:33" out tail gap={30} emoji><Emoji>👍👏❤️❤️</Emoji></Note>

            <DayPill>Yesterday</DayPill>

            <Bubble $tail $wide $gap={32}>
              <Tail />
              <Forwarded>
                <svg width="40" height="30" viewBox="0 0 40 30" fill="none" stroke={color.muted} strokeWidth="4" strokeLinecap="round" strokeLinejoin="round" aria-hidden="true">
                  <path d="M2 26V22Q2 12 12 12H27M18 3L27 12L18 21M28 3L37 12L28 21" />
                </svg>
                <span>Forwarded</span>
              </Forwarded>
              <OverlapRow>
                <Text>
                  <b>watch this video if you still have<br />problem to understand signal</b><br /><br />
                  <Link href="https://youtu.be/OmBUk8_fSS0?si=6Yhx6Zq86qAxDJj7">https://youtu.be/OmBUk8_fSS0?si=<br />6Yhx6Zq86qAxDJj7</Link>
                </Text>
                <Meta time="09:09" />
              </OverlapRow>
            </Bubble>

            <ScrollButton aria-label="Scroll to latest">
              <svg width="36" height="40" viewBox="0 0 36 40" fill="none" stroke="#9a9fa2" strokeWidth="6" strokeLinecap="round" strokeLinejoin="round">
                <path d="M4 4L18 18L32 4M4 21L18 35L32 21" />
              </svg>
            </ScrollButton>
          </Messages>

          <Composer onSubmit={e => e.preventDefault()}>
            <InputBar>
              <button type="button" aria-label="Stickers">
                <svg width="60" height="60" viewBox="0 0 60 60" fill="none" stroke="currentColor" strokeWidth="6" strokeLinejoin="round">
                  <path d="M20 3H40Q57 3 57 20V30Q57 34 53 38L38 53Q34 57 29 57H20Q3 57 3 40V20Q3 3 20 3Z" />
                  <path d="M55 33H48Q33 34 33 48V56" />
                  <circle cx="20" cy="20" r="4.500" fill="currentColor" stroke="none" />
                  <circle cx="41" cy="20" r="4.500" fill="currentColor" stroke="none" />
                  <path d="M18 35H36Q32 38 31 42Q21 42 18 35Z" fill="currentColor" strokeWidth="3" />
                </svg>
              </button>
              <MessageInput aria-label="Message" placeholder="Message" />
              <InputActions>
                <button type="button" aria-label="Attach">
                  <svg width="38" height="60" viewBox="0 0 38 60" fill="none" stroke="currentColor" strokeWidth="6" strokeLinecap="round">
                    <path d="M35 14V40Q35 57 19 57Q3 57 3 40V16Q3 3 14 3Q25 3 25 16V40Q25 46 19 46Q14 46 14 40V15" />
                  </svg>
                </button>
                <button type="button" aria-label="Camera">
                  <svg width="60" height="54" viewBox="0 0 60 54" fill="none" stroke="currentColor" strokeWidth="6" strokeLinejoin="round">
                    <path d="M4 9H16L21 3H39L44 9H56Q57 9 57 10V50Q57 51 56 51H4Q3 51 3 50V10Q3 9 4 9Z" />
                    <circle cx="30" cy="30" r="11" />
                  </svg>
                </button>
              </InputActions>
            </InputBar>
            <MicButton type="button" aria-label="Record voice message">
              <svg width="42" height="57" viewBox="0 0 42 57" fill="none" stroke="currentColor" strokeWidth="6" strokeLinecap="round">
                <rect x="12" y="0" width="18" height="36" rx="9" fill="currentColor" stroke="none" />
                <path d="M3 30Q6 45 21 45Q36 45 39 30M21 46V54" />
              </svg>
            </MicButton>
          </Composer>
        </Conversation>

        <NavBar><NavHandle /></NavBar>
      </Screen>
    </>
  );
}
